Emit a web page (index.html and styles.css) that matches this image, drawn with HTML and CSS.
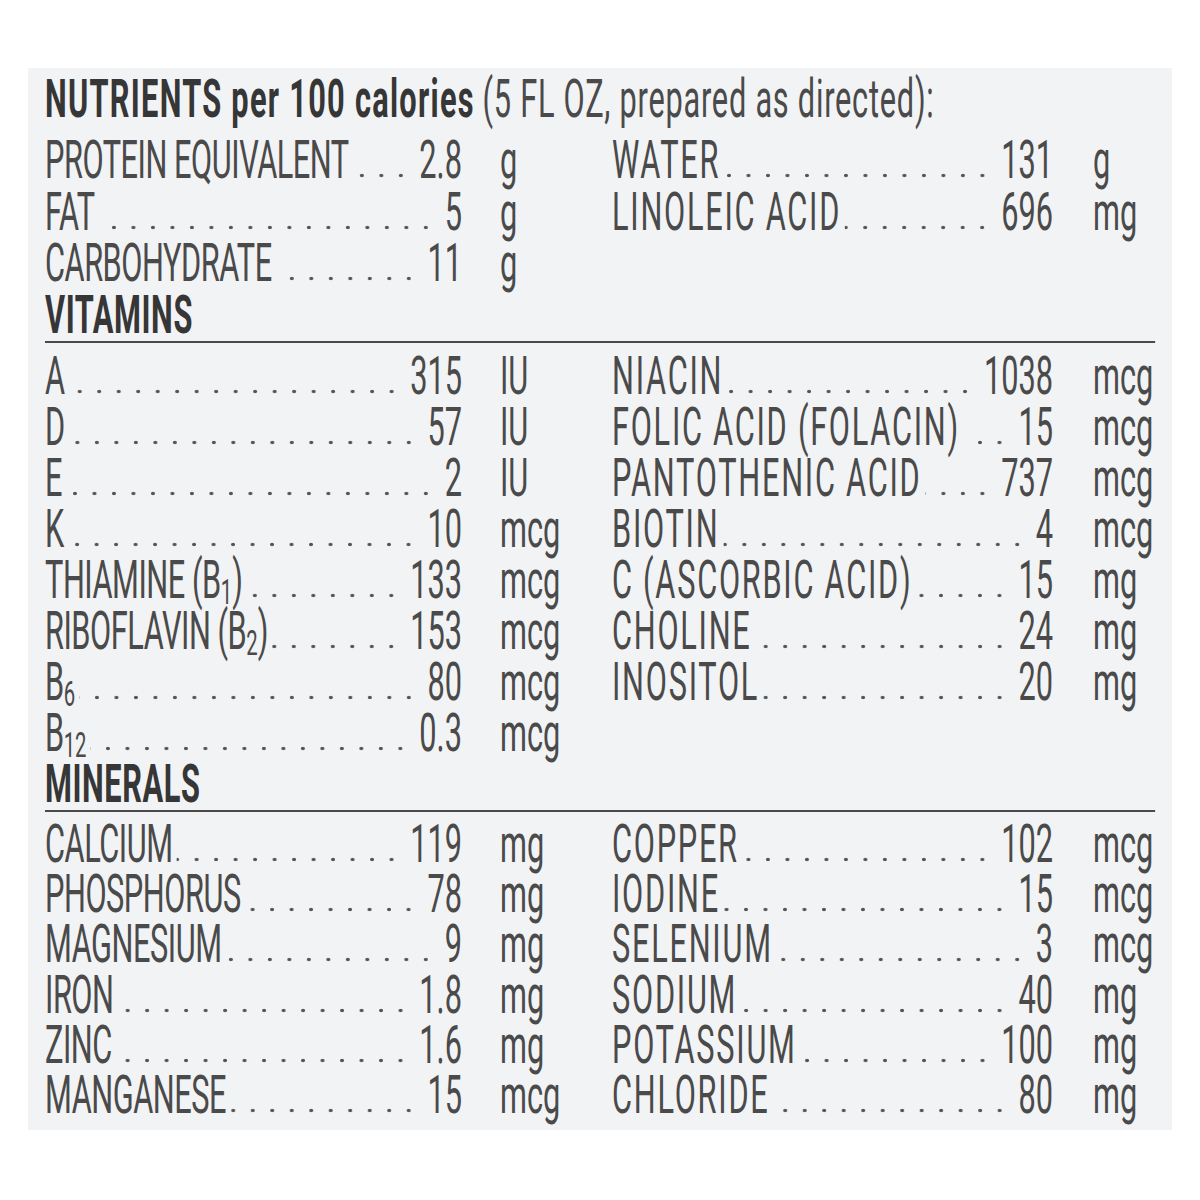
FILE: index.html
```html
<!DOCTYPE html>
<html lang="en">
<head>
<meta charset="utf-8">
<title>Nutrients per 100 calories</title>
<link rel="stylesheet" href="styles.css">
</head>
<body>
<div class="panel">
  <div class="sheet">
    <div class="title"><b>NUTRIENTS per 100 calories</b> <span class="note">(5 FL OZ, prepared as directed):</span></div>

    <div class="grid top">
      <div class="col left">
        <div class="row"><span class="name">PROTEIN EQUIVALENT</span><span class="dots"></span><span class="val">2.8</span><span class="unit">g</span></div>
        <div class="row"><span class="name">FAT</span><span class="dots"></span><span class="val">5</span><span class="unit">g</span></div>
        <div class="row"><span class="name">CARBOHYDRATE</span><span class="dots"></span><span class="val">11</span><span class="unit">g</span></div>
      </div>
      <div class="col right">
        <div class="row"><span class="name">WATER</span><span class="dots"></span><span class="val">131</span><span class="unit">g</span></div>
        <div class="row"><span class="name">LINOLEIC ACID</span><span class="dots"></span><span class="val">696</span><span class="unit">mg</span></div>
      </div>
    </div>

    <div class="section">VITAMINS</div>
    <div class="grid vit">
      <div class="col left">
        <div class="row"><span class="name">A</span><span class="dots"></span><span class="val">315</span><span class="unit">IU</span></div>
        <div class="row"><span class="name">D</span><span class="dots"></span><span class="val">57</span><span class="unit">IU</span></div>
        <div class="row"><span class="name">E</span><span class="dots"></span><span class="val">2</span><span class="unit">IU</span></div>
        <div class="row"><span class="name">K</span><span class="dots"></span><span class="val">10</span><span class="unit">mcg</span></div>
        <div class="row"><span class="name">THIAMINE (B<span class="sub">1</span>)</span><span class="dots"></span><span class="val">133</span><span class="unit">mcg</span></div>
        <div class="row"><span class="name">RIBOFLAVIN (B<span class="sub">2</span>)</span><span class="dots"></span><span class="val">153</span><span class="unit">mcg</span></div>
        <div class="row"><span class="name">B<span class="sub">6</span></span><span class="dots"></span><span class="val">80</span><span class="unit">mcg</span></div>
        <div class="row"><span class="name">B<span class="sub">12</span></span><span class="dots"></span><span class="val">0.3</span><span class="unit">mcg</span></div>
      </div>
      <div class="col right">
        <div class="row"><span class="name">NIACIN</span><span class="dots"></span><span class="val">1038</span><span class="unit">mcg</span></div>
        <div class="row"><span class="name">FOLIC ACID (FOLACIN)</span><span class="dots"></span><span class="val">15</span><span class="unit">mcg</span></div>
        <div class="row"><span class="name">PANTOTHENIC ACID</span><span class="dots"></span><span class="val">737</span><span class="unit">mcg</span></div>
        <div class="row"><span class="name">BIOTIN</span><span class="dots"></span><span class="val">4</span><span class="unit">mcg</span></div>
        <div class="row"><span class="name">C (ASCORBIC ACID)</span><span class="dots"></span><span class="val">15</span><span class="unit">mg</span></div>
        <div class="row"><span class="name">CHOLINE</span><span class="dots"></span><span class="val">24</span><span class="unit">mg</span></div>
        <div class="row"><span class="name">INOSITOL</span><span class="dots"></span><span class="val">20</span><span class="unit">mg</span></div>
      </div>
    </div>

    <div class="section">MINERALS</div>
    <div class="grid min">
      <div class="col left">
        <div class="row"><span class="name">CALCIUM</span><span class="dots"></span><span class="val">119</span><span class="unit">mg</span></div>
        <div class="row"><span class="name">PHOSPHORUS</span><span class="dots"></span><span class="val">78</span><span class="unit">mg</span></div>
        <div class="row"><span class="name">MAGNESIUM</span><span class="dots"></span><span class="val">9</span><span class="unit">mg</span></div>
        <div class="row"><span class="name">IRON</span><span class="dots"></span><span class="val">1.8</span><span class="unit">mg</span></div>
        <div class="row"><span class="name">ZINC</span><span class="dots"></span><span class="val">1.6</span><span class="unit">mg</span></div>
        <div class="row"><span class="name">MANGANESE</span><span class="dots"></span><span class="val">15</span><span class="unit">mcg</span></div>
      </div>
      <div class="col right">
        <div class="row"><span class="name">COPPER</span><span class="dots"></span><span class="val">102</span><span class="unit">mcg</span></div>
        <div class="row"><span class="name">IODINE</span><span class="dots"></span><span class="val">15</span><span class="unit">mcg</span></div>
        <div class="row"><span class="name">SELENIUM</span><span class="dots"></span><span class="val">3</span><span class="unit">mcg</span></div>
        <div class="row"><span class="name">SODIUM</span><span class="dots"></span><span class="val">40</span><span class="unit">mg</span></div>
        <div class="row"><span class="name">POTASSIUM</span><span class="dots"></span><span class="val">100</span><span class="unit">mg</span></div>
        <div class="row"><span class="name">CHLORIDE</span><span class="dots"></span><span class="val">80</span><span class="unit">mg</span></div>
      </div>
    </div>
  </div>
</div>
</body>
</html>
```

FILE: styles.css
```css
html, body {
  margin: 0;
  padding: 0;
  background: #ffffff;
}

body {
  padding: 68px 28px 0 28px;
  height: 1200px;
  box-sizing: border-box;
  overflow: hidden;
}

.panel {
  --s: 0.58;
  width: 1144px;
  height: 1062px;
  background: #f2f3f5;
  box-sizing: border-box;
  padding: 6px 0 0 17px;
  overflow: hidden;
}

.sheet {
  width: calc(1110px / var(--s));
  transform: scaleX(var(--s));
  transform-origin: 0 0;
  font-family: Roboto, "Liberation Sans", sans-serif;
  font-size: 53px;
  font-weight: 400;
  color: #4a4a4a;
}

.title {
  line-height: 51px;
  height: 51px;
  margin-bottom: 10px;
  white-space: nowrap;
}

.title b {
  font-weight: 700;
  color: #363636;
  letter-spacing: 2.2px;
}

.title .note {
  letter-spacing: 1.3px;
}

.section {
  font-weight: 700;
  color: #363636;
  line-height: 51px;
  height: 51px;
  letter-spacing: 1px;
  border-bottom: 2.5px solid #4a4a4a;
}

.grid {
  display: grid;
  grid-template-columns: calc(567px / var(--s)) calc(543px / var(--s));
}

.vit { margin-top: 8px; }
.min { margin-top: 7px; }

.row {
  display: flex;
  align-items: baseline;
  height: 51px;
  line-height: 51px;
  white-space: nowrap;
}

.top .row { height: 51.5px; line-height: 51.5px; }
.min .row { height: 50.4px; line-height: 50.4px; }

.name { flex: none; }
.left .name { letter-spacing: -0.8px; }
.right .name { letter-spacing: 3px; }

.sub {
  font-size: 0.66em;
  line-height: 0;
  letter-spacing: 0;
  vertical-align: -0.18em;
}

.dots {
  flex: 1 1 auto;
  height: 5px;
  margin: 0 calc(9px / var(--s)) 0 calc(4px / var(--s));
  background-image: radial-gradient(ellipse 3.6px 2.1px at 50% 50%, #555555 75%, rgba(85,85,85,0) 100%);
  background-size: calc(19.5px / var(--s)) 5px;
  background-repeat: repeat-x;
  background-position: right 0 top 0;
}

.val {
  flex: none;
  text-align: right;
}

.unit {
  flex: none;
  box-sizing: border-box;
}

.left .unit {
  width: calc(150px / var(--s));
  padding-left: calc(38px / var(--s));
}

.right .unit {
  width: calc(102px / var(--s));
  padding-left: calc(40px / var(--s));
}
```
